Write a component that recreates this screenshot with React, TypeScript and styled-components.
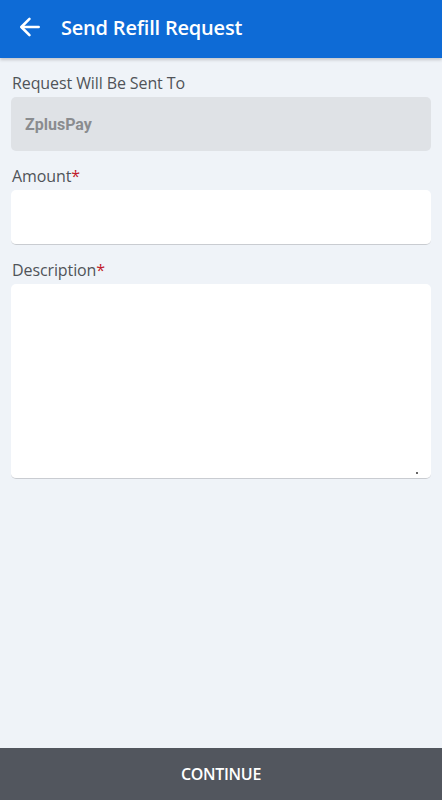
import React from 'react';
import styled, { createGlobalStyle } from 'styled-components';

const GlobalStyle = createGlobalStyle`
  html, body {
    margin: 0;
    padding: 0;
    background: #eff3f8;
    font-family: 'Open Sans', sans-serif;
  }
  #root {
    min-height: 100vh;
  }
`;

const Page = styled.div`
  display: flex;
  flex-direction: column;
  height: 800px;
  background: #eff3f8;
`;

const Header = styled.header`
  display: flex;
  align-items: center;
  gap: 18px;
  height: 58px;
  padding: 0 17px 4px;
  box-sizing: border-box;
  background: #0e6bd6;
  box-shadow: 0 2px 3px rgba(0, 0, 0, 0.18);
  position: relative;
  z-index: 1;
`;

const BackButton = styled.button`
  display: flex;
  align-items: center;
  justify-content: center;
  padding: 0;
  border: none;
  background: none;
  color: #fff;
`;

const Title = styled.h1`
  margin: 0;
  color: #fff;
  font-size: 20px;
  font-weight: 600;
  letter-spacing: -0.2px;
`;

const Form = styled.main`
  flex: 1;
  display: flex;
  flex-direction: column;
  padding: 14px 11px 0;
`;

const Label = styled.label`
  display: block;
  margin: 0 0 3px 1px;
  color: #505358;
  font-size: 16px;
  line-height: 22px;
  letter-spacing: -0.1px;
`;

const Required = styled.span`
  color: #c21a2a;
`;

const Field = styled.div`
  margin-bottom: 14px;
`;

const ReadOnlyBox = styled.div`
  display: flex;
  align-items: center;
  height: 54px;
  padding: 0 14px;
  box-sizing: border-box;
  background: #dfe2e6;
  border-radius: 5px;
  color: #8a8c8f;
  font-family: Roboto, 'Liberation Sans', sans-serif;
  font-weight: 700;
  font-size: 16px;
`;

const Input = styled.input`
  display: block;
  width: 100%;
  height: 55px;
  box-sizing: border-box;
  border: none;
  border-bottom: 1px solid #c9ccd1;
  border-radius: 5px;
  background: #fff;
  padding: 0 14px;
  font-family: 'Open Sans', sans-serif;
  font-size: 16px;
  outline: none;
`;

const AreaWrap = styled.div`
  position: relative;

  &::after {
    content: '';
    position: absolute;
    right: 13px;
    bottom: 5px;
    width: 2px;
    height: 2px;
    background: #666;
  }
`;

const TextArea = styled.textarea<{ $height: number }>`
  display: block;
  width: 100%;
  height: ${(p) => p.$height}px;
  box-sizing: border-box;
  border: none;
  border-bottom: 1px solid #c9ccd1;
  border-radius: 5px;
  background: #fff;
  padding: 12px 14px;
  font-family: 'Open Sans', sans-serif;
  font-size: 16px;
  outline: none;
  resize: none;
`;

const ContinueButton = styled.button`
  height: 52px;
  width: 100%;
  border: none;
  background: #52565e;
  color: #fff;
  font-family: 'Open Sans', sans-serif;
  font-size: 16px;
  font-weight: 600;
  letter-spacing: -0.3px;
`;

const App = () => {
  return (
    <Page>
      <GlobalStyle />
      <Header>
        <BackButton aria-label="Back">
          <svg width="26" height="26" viewBox="0 0 24 24" fill="none" stroke="currentColor" strokeWidth="2.4" strokeLinecap="round" strokeLinejoin="round">
            <path d="M20 12H4.5" />
            <path d="M11.5 4.5L4 12l7.5 7.5" />
          </svg>
        </BackButton>
        <Title>Send Refill Request</Title>
      </Header>
      <Form>
        <Field>
          <Label>Request Will Be Sent To</Label>
          <ReadOnlyBox>ZplusPay</ReadOnlyBox>
        </Field>
        <Field>
          <Label>
            Amount<Required>*</Required>
          </Label>
          <Input type="text" />
        </Field>
        <Field>
          <Label>
            Description<Required>*</Required>
          </Label>
          <AreaWrap>
            <TextArea $height={195} />
          </AreaWrap>
        </Field>
      </Form>
      <ContinueButton>CONTINUE</ContinueButton>
    </Page>
  );
};

export default App;
